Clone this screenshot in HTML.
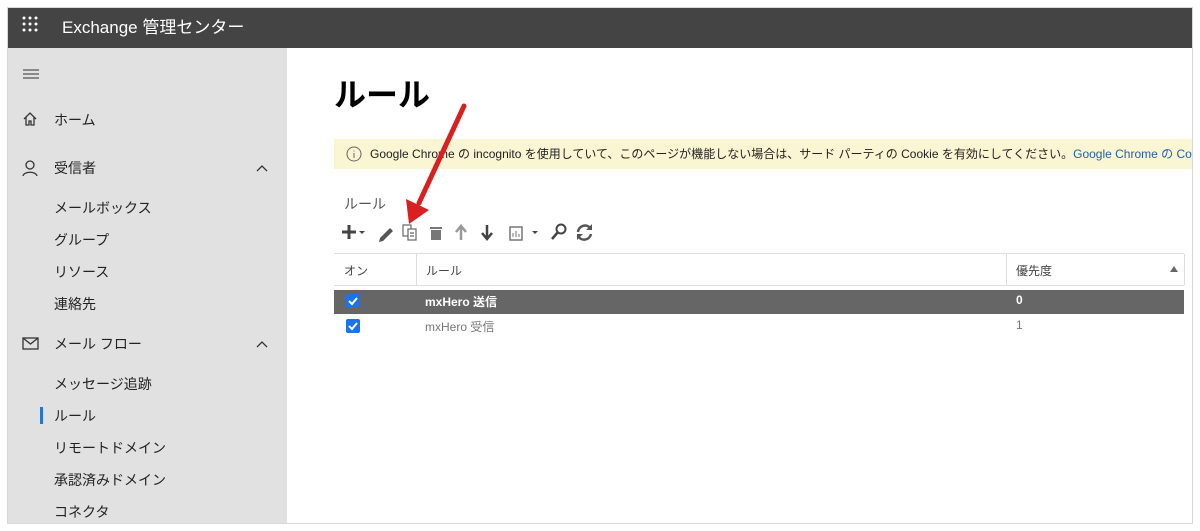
<!DOCTYPE html>
<html><head><meta charset="utf-8"><style>
*{margin:0;padding:0;box-sizing:border-box}
body{width:1200px;height:531px;background:#fff;font-family:"Liberation Sans","Noto Sans CJK JP",sans-serif;position:relative;overflow:hidden}
.frame{position:absolute;left:7px;top:7px;width:1186px;height:517px;border:1px solid #d8d8d8;overflow:hidden;background:#fff}
.hdr{position:absolute;left:0;top:0;width:100%;height:40px;background:#444;color:#fff}
.hdr .t{position:absolute;left:54px;top:5px;font-size:17px}
.side{position:absolute;left:0;top:40px;width:279px;height:480px;background:#e1e1e1;color:#222;font-size:14px}
.a{position:absolute}
.nav{position:absolute;left:46px}
.r{position:absolute;font-size:12px}
</style></head><body>
<div class="frame">
<div class="hdr">
<svg class="a" style="left:14px;top:8px" width="16" height="16" fill="#fff"><circle cx="2" cy="2" r="1.5"/><circle cx="8" cy="2" r="1.5"/><circle cx="14" cy="2" r="1.5"/><circle cx="2" cy="8" r="1.5"/><circle cx="8" cy="8" r="1.5"/><circle cx="14" cy="8" r="1.5"/><circle cx="2" cy="14" r="1.5"/><circle cx="8" cy="14" r="1.5"/><circle cx="14" cy="14" r="1.5"/></svg>
<div class="t">Exchange 管理センター</div>
</div>
<div class="side">
<svg class="a" style="left:14px;top:20px" width="18" height="12" stroke="#555" stroke-width="1.3"><path d="M1 2H17M1 6H17M1 10H17"/></svg>
<svg class="a" style="left:14px;top:63px" width="16" height="16" fill="none" stroke="#333" stroke-width="1.3"><path d="M2 8L8 2L14 8M4 6V14H7V10H9V14H12V6"/></svg>
<div class="nav" style="top:62px">ホーム</div>
<svg class="a" style="left:14px;top:111px" width="16" height="18" fill="none" stroke="#333" stroke-width="1.3"><circle cx="8" cy="6" r="4"/><path d="M1 17C2 12 14 12 15 17"/></svg>
<div class="nav" style="top:110px">受信者</div>
<svg class="a" style="left:248px;top:116px" width="12" height="8" fill="none" stroke="#333" stroke-width="1.3"><path d="M1 7L6 2L11 7"/></svg>
<div class="nav" style="top:150px">メールボックス</div>
<div class="nav" style="top:182px">グループ</div>
<div class="nav" style="top:214px">リソース</div>
<div class="nav" style="top:246px">連絡先</div>
<svg class="a" style="left:14px;top:289px" width="17" height="13" fill="none" stroke="#333" stroke-width="1.3"><rect x="1" y="1" width="15" height="11"/><path d="M1 1L8.5 7L16 1"/></svg>
<div class="nav" style="top:286px">メール フロー</div>
<svg class="a" style="left:248px;top:292px" width="12" height="8" fill="none" stroke="#333" stroke-width="1.3"><path d="M1 7L6 2L11 7"/></svg>
<div class="nav" style="top:326px">メッセージ追跡</div>
<div class="a" style="left:32px;top:359px;width:3px;height:17px;background:#2a72d2"></div>
<div class="nav" style="top:358px">ルール</div>
<div class="nav" style="top:390px">リモートドメイン</div>
<div class="nav" style="top:422px">承認済みドメイン</div>
<div class="nav" style="top:454px">コネクタ</div>
</div>
<div class="a" style="left:1184px;top:40px;width:2px;height:480px;background:#ddd"></div>
<div class="a" style="left:326px;top:62px;font-size:32px;font-weight:bold;color:#000">ルール</div>
<div class="a" style="left:326px;top:131px;width:858px;height:30px;background:#faf5d2;font-size:12px;color:#222;line-height:30px;white-space:nowrap;padding-left:36px;overflow:hidden">Google Chrome の incognito を使用していて、このページが機能しない場合は、サード パーティの Cookie を有効にしてください。<span style="color:#2461a8">Google Chrome の Cookie 管理</span>
<svg class="a" style="left:12px;top:7px" width="16" height="16" fill="none" stroke="#666"><circle cx="8" cy="8" r="7"/><path d="M8 7V12M8 4.5V5.5"/></svg></div>
<div class="a" style="left:336px;top:186px;font-size:14px;color:#555">ルール</div>
<svg class="a" style="left:330px;top:213px" width="270" height="22">
<path d="M4 11H18M11 4V18" stroke="#444" stroke-width="3"/><path d="M21 10L27 10L24 13Z" fill="#444"/>
<path d="M42 17L52 7L55 10L45 20L41 21Z" fill="#555"/>
<g fill="none" stroke="#666" stroke-width="1.2"><rect x="65" y="4" width="8" height="11"/><rect x="70" y="8" width="8" height="11" fill="#fff"/><path d="M72 12H76M72 15H76"/></g>
<g fill="#777"><rect x="92" y="6" width="12" height="2"/><rect x="93" y="9" width="10" height="10"/></g>
<path d="M123 19V6M118 11L123 5L128 11" stroke="#999" stroke-width="2.5" fill="none"/>
<path d="M149 4V17M144 12L149 18L154 12" stroke="#444" stroke-width="2.5" fill="none"/>
<rect x="172" y="6" width="12" height="13" fill="none" stroke="#777" stroke-width="1.5"/><path d="M175 16V12M178 16V10M181 16V13" stroke="#777"/>
<path d="M194 10L200 10L197 13Z" fill="#444"/>
<circle cx="223" cy="8" r="4.5" fill="none" stroke="#444" stroke-width="2"/><path d="M220 11L214 18" stroke="#444" stroke-width="2.5"/>
<path d="M240 11A7 7 0 0 1 253 8M253 13A7 7 0 0 1 240 15" fill="none" stroke="#555" stroke-width="2.5"/><path d="M254 3V9H248Z M239 19V13H245Z" fill="#555"/>
</svg>
<div class="a" style="left:326px;top:245px;width:850px;height:33px;border-top:1px solid #ddd;border-bottom:1px solid #ddd"></div>
<div class="a" style="left:408px;top:246px;width:1px;height:31px;background:#ddd"></div>
<div class="a" style="left:998px;top:246px;width:1px;height:31px;background:#ddd"></div>
<div class="a" style="left:1176px;top:246px;width:1px;height:31px;background:#ddd"></div>
<div class="r" style="left:336px;top:254px;color:#444">オン</div>
<div class="r" style="left:418px;top:254px;color:#444">ルール</div>
<div class="r" style="left:1008px;top:254px;color:#444">優先度</div>
<svg class="a" style="left:1162px;top:258px" width="8" height="6"><path d="M0 6L4 0L8 6Z" fill="#666"/></svg>
<div class="a" style="left:326px;top:282px;width:850px;height:24px;background:#666"></div>
<div class="r" style="left:417px;top:285px;color:#fff;font-weight:bold">mxHero 送信</div>
<div class="r" style="left:1008px;top:285px;color:#fff;font-weight:bold">0</div>
<div class="r" style="left:417px;top:310px;color:#777">mxHero 受信</div>
<div class="r" style="left:1008px;top:310px;color:#777">1</div>
<svg class="a" style="left:338px;top:286px" width="14" height="14"><rect width="14" height="14" rx="2" fill="#1a73e8"/><path d="M3 7L6 10L11 4" stroke="#fff" stroke-width="2" fill="none"/></svg>
<svg class="a" style="left:338px;top:311px" width="14" height="14"><rect width="14" height="14" rx="2" fill="#1a73e8"/><path d="M3 7L6 10L11 4" stroke="#fff" stroke-width="2" fill="none"/></svg>
<svg class="a" style="left:390px;top:94px" width="80" height="140"><path d="M66 4L21 101" stroke="#d91f1f" stroke-width="5" stroke-linecap="round"/><path d="M8 97L11 122L31 108Z" fill="#d91f1f"/></svg>
</div>
</body></html>
